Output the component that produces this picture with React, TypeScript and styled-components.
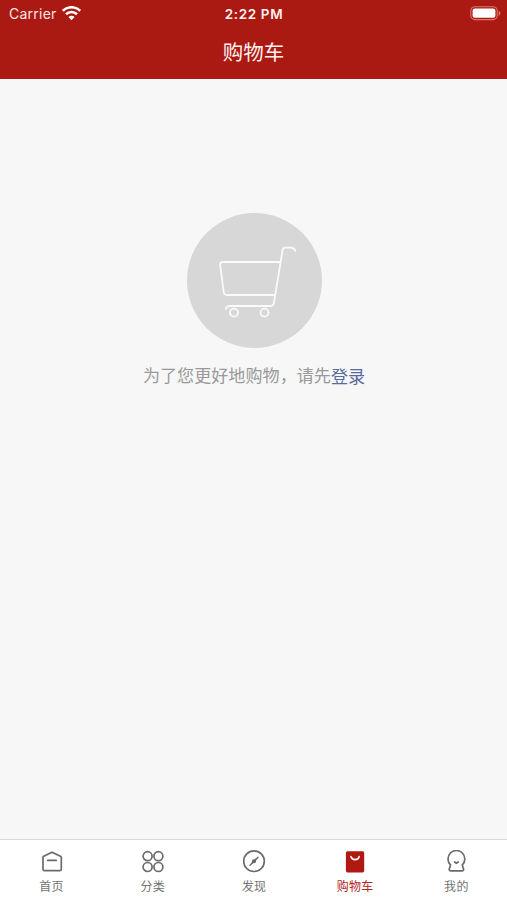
import React from "react";
import styled, { createGlobalStyle } from "styled-components";

const Global = createGlobalStyle`
  * { box-sizing: border-box; }
  body { margin: 0; background: #f7f7f7; }
`;

const Screen = styled.div`
  display: flex;
  flex-direction: column;
  width: 100%;
  height: 100vh;
  overflow: hidden;
  background: #f7f7f7;
  font-family: Inter, "Noto Sans CJK SC", sans-serif;
`;

const Header = styled.header`
  height: 79px;
  flex: none;
  background: #ab1a12;
  color: #fff;
`;

const StatusBar = styled.div`
  display: grid;
  grid-template-columns: 1fr auto 1fr;
  align-items: center;
  height: 27px;
  padding: 0 6px 0 9px;
  line-height: 27px;
`;

const Carrier = styled.div`
  display: flex;
  align-items: center;
  gap: 5px;
  height: 27px;
  font-size: 14px;
  letter-spacing: 0.25px;
  color: #fbe6e4;
`;

const Clock = styled.div`
  margin-left: -2px;
  padding-top: 1px;
  line-height: 26px;
  font-size: 13.5px;
  font-weight: 600;
  letter-spacing: 0.65px;
  color: #fff2f0;
`;

const BatterySlot = styled.div`
  display: flex;
  justify-content: flex-end;
`;

const Title = styled.h1`
  margin: 0;
  height: 51px;
  line-height: 51px;
  text-align: center;
  font-size: 20.5px;
  font-weight: 400;
  color: #fff1ef;
`;

const Content = styled.main`
  flex: 1;
  display: flex;
  flex-direction: column;
  align-items: center;
  padding: 134px 0 0 1px;
`;

const Disc = styled.div`
  width: 135px;
  height: 135px;
  border-radius: 50%;
  background: #d7d7d7;
`;

const Hint = styled.p`
  display: flex;
  margin: 15px 0 0;
  font-size: 17.1px;
  line-height: 26px;
  color: #999;
`;

const LoginLink = styled.a`
  padding-top: 1px;
  color: #576b9e;
`;

const TabBar = styled.nav`
  display: grid;
  grid-template-columns: repeat(5, 1fr);
  flex: none;
  height: 61px;
  padding-left: 1px;
  border-top: 1px solid #d9d9d9;
  background: #fff;
`;

const Tab = styled.div<{ $active?: boolean }>`
  display: flex;
  flex-direction: column;
  align-items: center;
  padding-top: 10px;
  font-size: 12px;
  line-height: 18px;
  letter-spacing: 0.3px;
  color: ${(p) => (p.$active ? "#b3251f" : "#737373")};
`;

const TabIcon = styled.svg`
  width: 24px;
  height: 24px;
  margin-bottom: 4px;
  fill: none;
  stroke: #6b6b6b;
  stroke-width: 1.7;
  stroke-linecap: round;
  stroke-linejoin: round;
`;

const tabs = [
  {
    label: "首页",
    icon: (
      <>
        <path d="M3.7 6.3 12 2.2 20.5 6.3a1.4 1.4 0 0 1 .8 1.2v11.7a1.4 1.4 0 0 1-1.4 1.4H4.4a1.4 1.4 0 0 1-1.4-1.4V7.5A1.4 1.4 0 0 1 3.7 6.3Z" />
        <path d="M7.8 10.4h8.4" />
      </>
    ),
  },
  {
    label: "分类",
    icon: (
      <>
        <circle cx="6.6" cy="6.2" r="4.5" />
        <circle cx="17.4" cy="6.2" r="4.5" />
        <circle cx="6.6" cy="17" r="4.5" />
        <circle cx="17.4" cy="17" r="4.5" />
      </>
    ),
  },
  {
    label: "发现",
    icon: (
      <>
        <circle cx="12" cy="11.2" r="10.3" />
        <path d="M14.6 8.6 10.3 9.7 9.4 13.8 13.7 12.7Z" fill="#6b6b6b" stroke="none" />
        <path d="M16 7.2 8 15.2" strokeWidth="1.5" />
      </>
    ),
  },
  {
    label: "购物车",
    active: true,
    icon: (
      <>
        <rect x="2.9" y="1.2" width="18.3" height="21.2" rx="1.6" fill="#b01812" stroke="none" />
        <path d="M8 6.6a4.2 3.8 0 0 0 8.2 0" stroke="#fff" strokeWidth="1.7" />
      </>
    ),
  },
  {
    label: "我的",
    icon: (
      <>
        <path d="M6.5 14.9A8.4 8.4 0 1 1 18.3 14.9L19.4 18.7a1.5 1.5 0 0 1-1.4 2.2H6.8a1.5 1.5 0 0 1-1.4-2.2Z" />
        <path d="m10.6 12 1.8 1.2 1.8-1.2" strokeWidth="1.8" />
      </>
    ),
  },
];

function Wifi() {
  return (
    <svg width="19" height="15" viewBox="0 0 18 14" fill="none" stroke="#fff" strokeWidth="2.4">
      <path d="M.8 4.4a11.7 11.7 0 0 1 16.4 0" />
      <path d="M3.8 7.7a7.4 7.4 0 0 1 10.4 0" />
      <path d="M9 13.3 6.1 10.4a4.1 4.1 0 0 1 5.8 0Z" fill="#fff" stroke="none" />
    </svg>
  );
}

function Battery() {
  return (
    <svg width="31" height="15" viewBox="0 0 31 15">
      <rect x=".8" y=".8" width="26.4" height="12.8" rx="4" fill="none" stroke="#d9776f" strokeWidth="1.1" />
      <rect x="2.6" y="2.6" width="22.8" height="9.2" rx="2" fill="#fff" />
      <path d="M28.6 4.8c2.4 1.2 2.4 3.8 0 5Z" fill="#d9776f" />
    </svg>
  );
}

function Cart() {
  return (
    <svg width="135" height="135" viewBox="0 0 135 135" fill="none" stroke="#fafafa" strokeWidth="1.8" strokeLinecap="round" strokeLinejoin="round">
      <path d="M93 49H35.5Q33 49 33.2 51.5L36.6 78.5Q37 82 40.3 82H88" />
      <path d="M108.4 37.8C107.6 35.8 106 34.6 103.5 34.6H98.3Q96 34.6 95.6 37L86.8 90.3Q86.3 93 83.5 93H43Q40 93 38.8 95.8" />
      <circle cx="47" cy="99.6" r="4" />
      <circle cx="77.5" cy="99.6" r="4" />
    </svg>
  );
}

export default function App() {
  return (
    <Screen>
      <Global />
      <Header>
        <StatusBar>
          <Carrier>
            Carrier
            <Wifi />
          </Carrier>
          <Clock>2:22 PM</Clock>
          <BatterySlot>
            <Battery />
          </BatterySlot>
        </StatusBar>
        <Title>购物车</Title>
      </Header>
      <Content>
        <Disc>
          <Cart />
        </Disc>
        <Hint>
          为了您更好地购物，请先<LoginLink>登录</LoginLink>
        </Hint>
      </Content>
      <TabBar>
        {tabs.map((tab) => (
          <Tab key={tab.label} $active={tab.active}>
            <TabIcon viewBox="0 0 24 24">{tab.icon}</TabIcon>
            {tab.label}
          </Tab>
        ))}
      </TabBar>
    </Screen>
  );
}
